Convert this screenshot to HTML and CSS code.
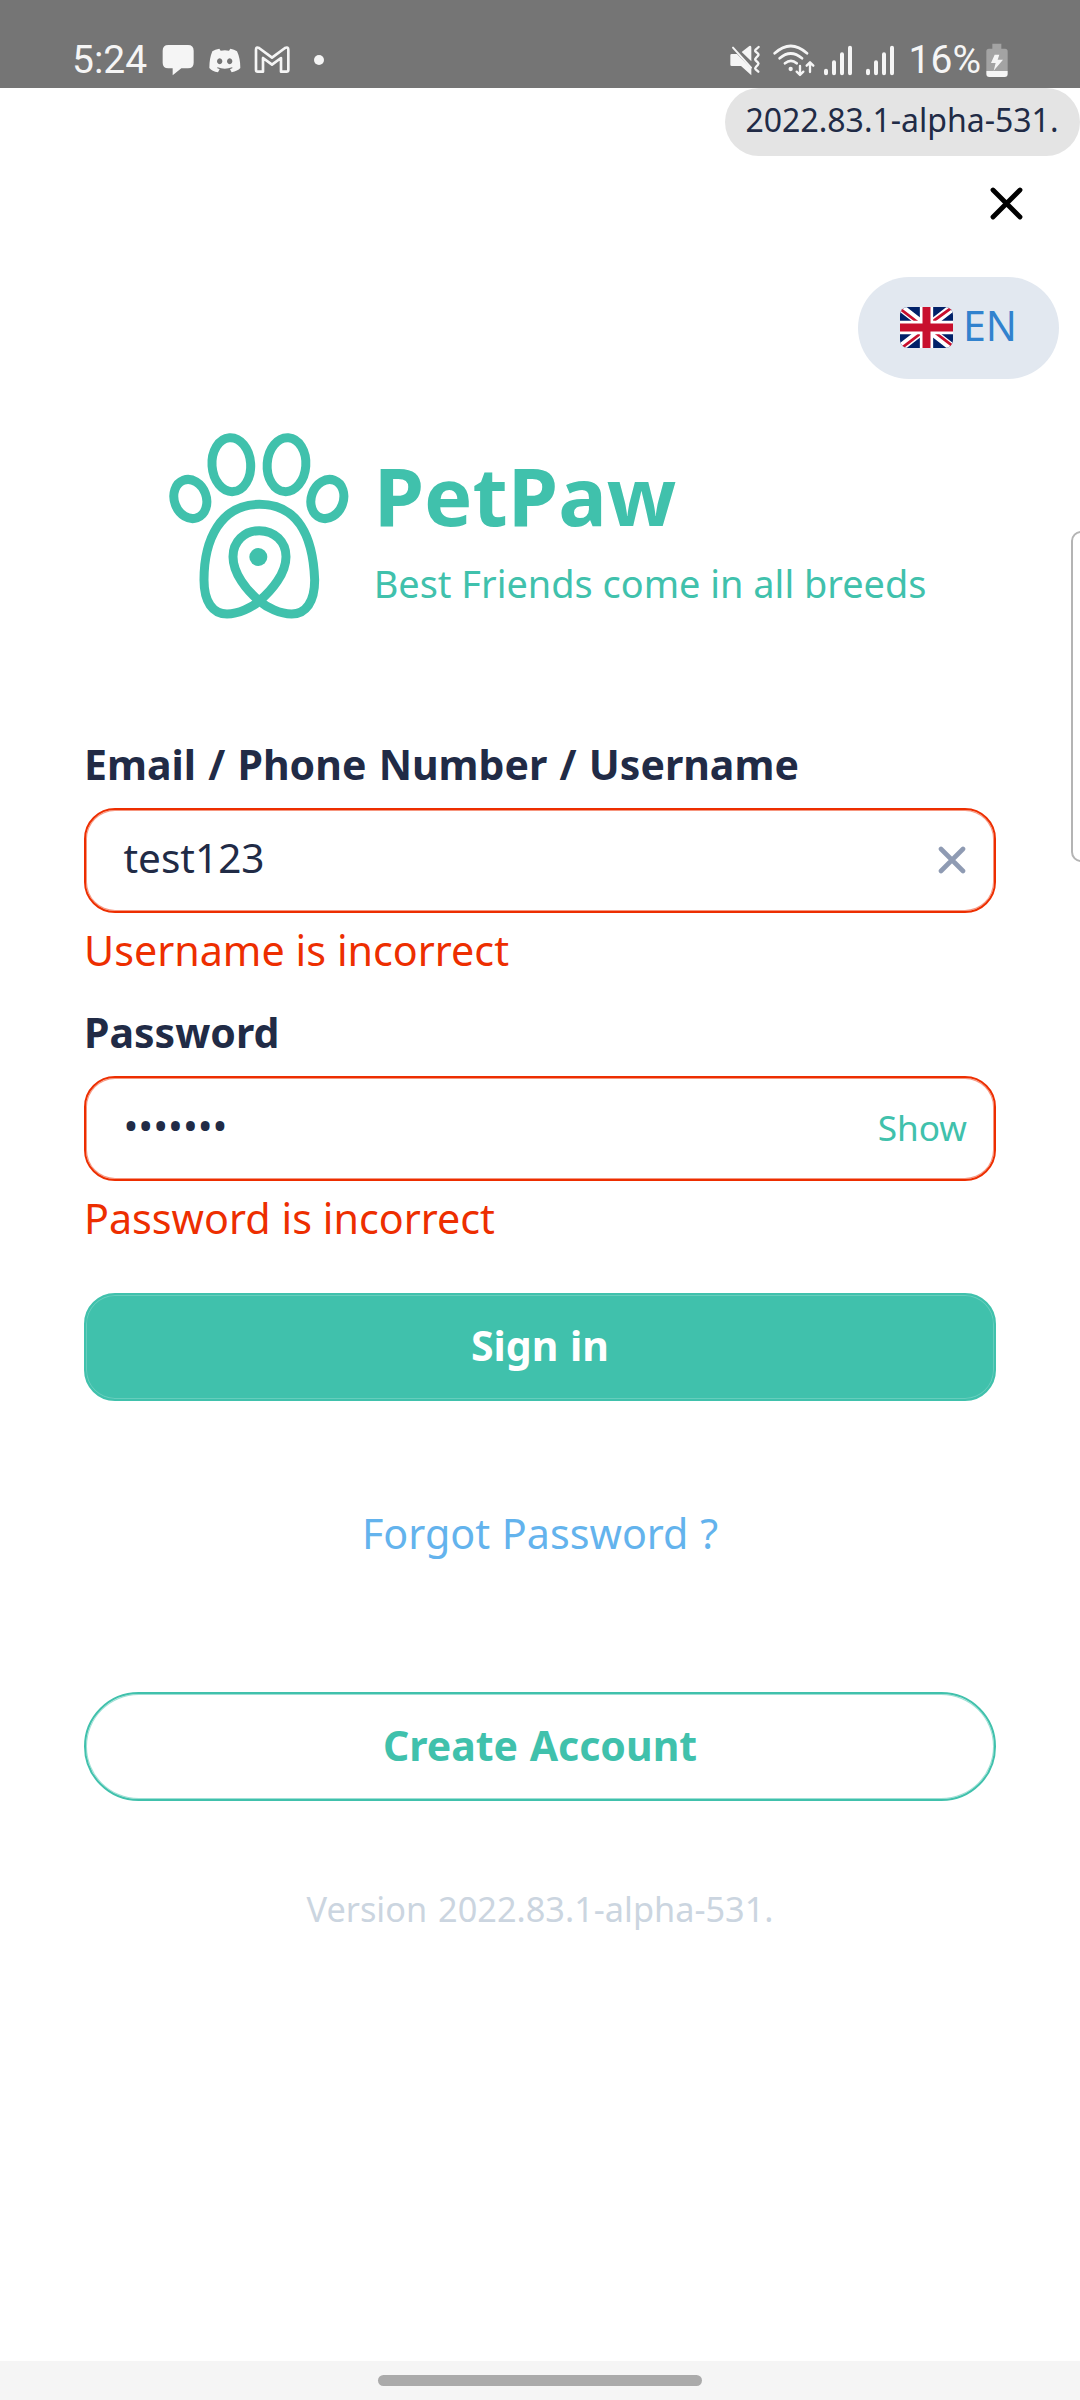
FILE: index.html
```html
<!DOCTYPE html>
<html lang="en">
<head>
<meta charset="utf-8">
<title>PetPaw – Sign in</title>
<link rel="stylesheet" href="styles.css">
</head>
<body>
<div class="screen">
  <header class="status">
    <span class="clock">5:24</span>
    <svg class="ico-message" width="32" height="40" viewBox="307 60 96 120"><path fill="#f5f5f5" d="M326 75h59q17 0 17 17v36q0 17-17 17h-20l-26 21v-21h-13q-17 0-17-17V92q0-17 17-17z"/></svg>
    <svg class="ico-discord" width="32" height="40" viewBox="449 60 96 120"><path fill="#f5f5f5" fill-rule="evenodd" d="M480 86q-13 2-21 8-9 21-9 50 8 10 26 13l5-9-8-4 2-2q21 8 43 0l2 2-8 4 5 9q18-4 26-13 0-29-10-50-8-6-20-8l-4 6q-12-2-25 0zM481 115a8 9 0 1 0 .1 0zM511 115a8 9 0 1 0 .1 0z"/></svg>
    <svg class="ico-gmail" width="36" height="40" viewBox="583 60 108 120"><path fill="none" stroke="#f5f5f5" stroke-width="8" stroke-linejoin="round" d="M589 90q0-11 9-6l39 29 39-29q10-5 10 6v60q0 5-6 5h-16v-41l-27 20-27-20v41h-16q-5 0-5-5z"/></svg>
    <span class="more"></span>
    <svg class="ico-mute" width="31" height="40" viewBox="59 60 93 120"><g fill="#f5f5f5"><path d="M64 102h16l43 44v20l-31-28H64q-4 0-4-4v-28q0-4 4-4zM94 96l23-18q6-2 6 4v42z"/></g><path d="M68 83l54 60" stroke="#f5f5f5" stroke-width="6" stroke-linecap="round"/><path fill="none" stroke="#f5f5f5" stroke-width="7" stroke-linecap="round" stroke-linejoin="round" d="M145 81l-9 8q-3 3 0 6l7 6q3 3 0 6l-7 8q-3 3 0 6l7 7q3 3 0 6l-7 8q-3 3 0 6l8 7"/></svg>
    <svg class="ico-wifi" width="42" height="40" viewBox="189 60 126 120"><g fill="none" stroke="#f5f5f5" stroke-width="8" stroke-linecap="round" stroke-linejoin="round"><path d="M194 100q48-44 97 0M209 115q33-29 67 0M225 130q18-15 35 0" /><path stroke-width="7" d="M270 138v26M260 155l10 10 10-10M300 156v-27M290 137l10-10 10 10"/></g><circle cx="242" cy="147" r="6.500" fill="#f5f5f5"/></svg>
    <svg class="ico-signal" width="28" height="40" viewBox="342 60 84 120"><path stroke="#f5f5f5" stroke-width="12" stroke-linecap="round" d="M348 152v8M372 127v33M396 103v57M420 83v77"/></svg>
    <svg class="ico-signal2" width="28" height="40" viewBox="468 60 84 120"><path stroke="#f5f5f5" stroke-width="12" stroke-linecap="round" d="M474 152v8M498 127v33M522 103v57M546 83v77"/></svg>
    <span class="percent">16%</span>
    <svg class="ico-battery" width="22" height="40" viewBox="830 60 66 120"><path fill="#a3a3a3" d="M849 71h27v15h11q8 0 8 8v59h-64V94q0-8 8-8h10z"/><path fill="#f5f5f5" d="M831 153h64v9q0 9-9 9h-46q-9 0-9-9zM856 104h14l-5 15h16l-28 33 6-23h-14z"/></svg>
  </header>

  <div class="build">2022.83.1-alpha-531.</div>
  <svg class="close" width="33" height="33" viewBox="-16.5 -16.5 33 33"><path stroke="#000" stroke-width="4.8" stroke-linecap="round" d="M-13.5-13.5l27 27M13.5-13.5l-27 27"/></svg>

  <div class="lang">
    <svg class="flag" width="53" height="41" viewBox="0 0 53 41"><path fill="#012169" d="M0 0h53v41H0z"/><path stroke="#fff" stroke-width="8" d="M0 0l53 41M53 0L0 41"/><path stroke="#c8102e" stroke-width="2.8" d="M-1 1l27.500 21M26.500 19l27.500 21M54-1L26.500 19M26.500 22L-1 43"/><path stroke="#fff" stroke-width="13.300" d="M26.500 0v41M0 20.500h53"/><path stroke="#c8102e" stroke-width="8" d="M26.500 0v41M0 20.500h53"/></svg>
    <span>EN</span>
  </div>

  <section class="brand">
    <svg class="paw" width="184" height="192" viewBox="50 60 552 576">
      <g fill="none" stroke="#40c1ac" stroke-width="27">
        <ellipse cx="243" cy="164" rx="58" ry="81" transform="rotate(-4 243 164)"/>
        <ellipse cx="408.500" cy="164" rx="58" ry="81" transform="rotate(4 408.500 164)"/>
        <ellipse cx="120" cy="267" rx="48" ry="60" transform="rotate(-20 120 267)"/>
        <ellipse cx="531" cy="267" rx="48" ry="60" transform="rotate(20 531 267)"/>
        <path d="M327 283C210 283 161 390 161 510C161 575 187 612 230 612C265 612 305 592 327 573C365 541 407 490 407 440C407 395 372 362 327 362C282 362 248 395 248 440C248 490 289 541 327 573C349 592 389 612 424 612C467 612 493 575 493 510C488 380 444 283 327 283Z"/>
      </g>
      <circle cx="324" cy="441" r="27" fill="#40c1ac"/>
    </svg>
    <div class="wordmark">
      <h1>PetPaw</h1>
      <p>Best Friends come in all breeds</p>
    </div>
  </section>

  <main class="form">
    <div class="field">
      <label>Email / Phone Number / Username</label>
      <div class="input">
        <span class="value">test123</span>
        <svg class="clear" width="28" height="28" viewBox="-14 -14 28 28"><path stroke="#8f9bb3" stroke-width="4.600" stroke-linecap="round" d="M-11-11l22 22M11-11l-22 22"/></svg>
      </div>
      <p class="error">Username is incorrect</p>
    </div>
    <div class="field">
      <label>Password</label>
      <div class="input">
        <span class="value dots">•••••••</span>
        <span class="show">Show</span>
      </div>
      <p class="error">Password is incorrect</p>
    </div>
    <div class="btn primary">Sign in</div>
    <div class="forgot">Forgot Password ?</div>
    <div class="btn outline">Create Account</div>
    <p class="version">Version 2022.83.1-alpha-531.</p>
  </main>

  <footer class="nav"><span class="pill"></span></footer>
  <div class="edge-panel"></div>
</div>
</body>
</html>
```
FILE: styles.css
```css
* { box-sizing: border-box; margin: 0; padding: 0; }
body { background: #fff; font-family: "Noto Sans", sans-serif; }
svg { display: block; flex: none; }
.screen {
  position: relative;
  width: 1080px;
  height: 2400px;
  overflow: hidden;
  display: flex;
  flex-direction: column;
  background: #fff;
  color: #212b46;
}

/* system status bar */
.status {
  height: 88px;
  flex: none;
  display: flex;
  align-items: center;
  padding: 32px 71px 0 72px;
  background: #757575;
  color: #f5f5f5;
  font: 39px/56px Roboto, sans-serif;
}
.ico-message { margin-left: 15px; }
.ico-discord { margin-left: 15px; }
.ico-gmail { margin-left: 13px; }
.more { width: 10px; height: 10px; margin-left: 24px; border-radius: 50%; background: #f5f5f5; }
.ico-mute { margin-left: auto; }
.ico-wifi { margin-left: 12px; }
.ico-signal { margin-left: 9px; }
.ico-signal2 { margin-left: 14px; }
.percent { margin-left: 15px; }
.ico-battery { margin-left: 5px; margin-right: 1px; }

.build {
  align-self: flex-end;
  width: 355px;
  height: 68px;
  border-radius: 34px;
  background: #e4e4e4;
  padding-left: 20.500px;
  font-size: 32px;
  line-height: 64px;
  white-space: nowrap;
}
.close { align-self: flex-end; margin: 31px 57px 57px 0; }
.lang {
  align-self: flex-end;
  width: 201px;
  height: 102px;
  margin-right: 21px;
  padding-left: 42px;
  display: flex;
  align-items: center;
  gap: 10px;
  border-radius: 51px;
  background: #e2e8f0;
  color: #3182ce;
  font-size: 41px;
  line-height: 54px;
}
.lang span { padding-bottom: 6px; }
.flag { border-radius: 8px; margin-bottom: 1px; }

.brand { display: flex; gap: 23px; margin: 51px 0 0 166.700px; color: #40c1ac; }
.wordmark { padding-top: 19.600px; white-space: nowrap; }
.wordmark h1 { font-size: 81.200px; line-height: 90px; }
.wordmark p { margin-top: 18.700px; font-size: 37.900px; line-height: 50px; }

.form {
  display: flex;
  flex-direction: column;
  padding: 115px 84px 0;
  font-size: 41.250px;
  line-height: 54px;
}
.field { display: flex; flex-direction: column; margin-bottom: 28px; }
.field label { font-weight: 700; font-size: 41px; word-spacing: 1.600px; margin-bottom: 17px; }
.input {
  height: 105px;
  border: 2px solid #ed2e00;
  border-radius: 31px;
  box-shadow: inset 0 0 0 1px rgba(237, 46, 0, .5);
  display: flex;
  justify-content: space-between;
  align-items: center;
  padding: 0 27px 0 37.500px;
}
.value { padding-bottom: 6px; font-size: 40.500px; }
.dots { font-size: 39.500px; }
.show { color: #40c1ac; font-size: 35.200px; padding-bottom: 4px; }
.clear { margin: 0 1px 1px 0; }
.error { margin-top: 10px; color: #ed2e00; word-spacing: .200px; }

.btn {
  display: flex;
  justify-content: center;
  align-items: center;
  padding-bottom: 4px;
  font-weight: 700;
  font-size: 41px;
  word-spacing: 1px;
  border: 2px solid #40c1ac;
}
.primary {
  height: 108px;
  margin-top: 20px;
  border-radius: 31px;
  background: #40c1ac;
  color: #fff;
  box-shadow: inset 0 0 0 1px rgba(255, 255, 255, .2);
}
.forgot { margin-top: 105px; text-align: center; color: #63b3ed; word-spacing: 1px; }
.outline {
  height: 109px;
  margin-top: 132px;
  border-radius: 54.500px;
  color: #40c1ac;
  box-shadow: inset 0 0 0 1px rgba(64, 193, 172, .5);
}
.version {
  margin-top: 85px;
  text-align: center;
  color: #cbd5e0;
  font-size: 34.300px;
  line-height: 46px;
  word-spacing: 2px;
}

/* gesture navigation */
.nav {
  height: 39px;
  margin-top: auto;
  flex: none;
  display: flex;
  justify-content: center;
  padding-top: 14px;
  background: #f5f5f5;
}
.pill { width: 324px; height: 11px; border-radius: 6px; background: #aaa; }

/* system side panel handle, overlaps the screen edge */
.edge-panel {
  position: absolute;
  right: -9px;
  top: 531px;
  width: 18px;
  height: 331px;
  border: 2px solid #b4b4b4;
  border-radius: 10px 0 0 10px;
}
```
